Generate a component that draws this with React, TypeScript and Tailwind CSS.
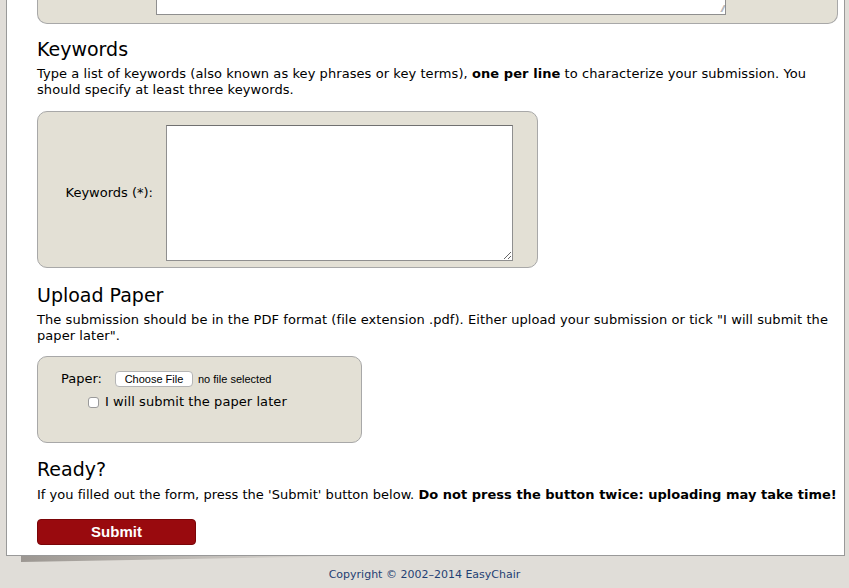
import React from "react";

const body = "font-['DejaVu_Sans',Verdana,sans-serif] text-[13px] leading-[16px] text-black";
const heading = "font-['DejaVu_Sans',Verdana,sans-serif] text-[19px] leading-[24px] text-black";
const box = "border border-[#a8a8a8] bg-[#e3e0d5] rounded-[10px]";

const Textarea = ({ className }: { className: string }) => (
  <textarea className={`block bg-white border border-[#8f8f8f] border-t-[#707070] outline-none resize ${className}`} />
);

const App = () => {
  return (
    <div className="min-h-screen bg-[#e0ddd8] overflow-hidden">
      <div className="ml-[6px] mr-[4px] bg-white border border-t-0 border-[#999] pl-[30px] pr-[6px] pb-[10px]">
        {/* tail of the abstract box above */}
        <div className="border border-t-0 border-[#a8a8a8] bg-[#e3e0d5] rounded-b-[10px] w-[801px] h-[24px] pl-[118px]">
          <div className="w-[570px] h-[15px] bg-white border border-t-0 border-[#8f8f8f] relative">
            <span className="absolute right-[1px] bottom-[1px] text-[8px] leading-[8px] text-[#888]">⁄⁄</span>
          </div>
        </div>

        <h2 className={`${heading} mt-[13px]`}>Keywords</h2>
        <p className={`${body} mt-[5px] tracking-[0.07px]`}>
          Type a list of keywords (also known as key phrases or key terms), <b>one per line</b> to characterize
          your submission. You should specify at least three keywords.
        </p>
        <div className={`${box} mt-[13px] w-[501px] flex items-center pt-[13px] pb-[6px]`}>
          <label className={`${body} w-[115px] text-right`}>Keywords (*):</label>
          <Textarea className="ml-[13px] w-[347px] h-[136px]" />
        </div>

        <h2 className={`${heading} mt-[15px]`}>Upload Paper</h2>
        <p className={`${body} mt-[5px] tracking-[0.07px]`}>
          The submission should be in the PDF format (file extension .pdf). Either upload your submission or tick
          "I will submit the paper later".
        </p>
        <div className={`${box} mt-[12px] w-[325px] h-[87px] pl-[23px] pt-[13px]`}>
          <div className="flex items-center h-[18px]">
            <span className={`${body} w-[54px]`}>Paper:</span>
            <button className="h-[16px] w-[78px] bg-white border border-[#b5b5b5] rounded-[4px] font-['Liberation_Sans',Arial,sans-serif] text-[11px] leading-[14px] text-black">
              Choose File
            </button>
            <span className="ml-[5px] font-['Liberation_Sans',Arial,sans-serif] text-[11px] text-black">no file selected</span>
          </div>
          <label className="flex items-center h-[18px] mt-[5px] ml-[27px]">
            <input type="checkbox" className="w-[11px] h-[11px] m-0 appearance-none bg-white border border-[#9a9a9a] rounded-[3px]" />
            <span className={`${body} ml-[6px] tracking-[0.07px]`}>I will submit the paper later</span>
          </label>
        </div>

        <h2 className={`${heading} mt-[14px]`}>Ready?</h2>
        <p className={`${body} mt-[6px] whitespace-nowrap tracking-[0.02px]`}>
          If you filled out the form, press the 'Submit' button below.{" "}
          <b>Do not press the button twice: uploading may take time!</b>
        </p>
        <button className="mt-[16px] w-[159px] h-[26px] rounded-[4px] bg-[#990a0e] border border-[#7a0508] text-white font-['Liberation_Sans',Arial,sans-serif] font-bold text-[15px] leading-[20px]">
          Submit
        </button>
      </div>
      <div className="ml-[21px] w-[330px] h-[6px] bg-gradient-to-r from-[#9c9792] to-[#e0ddd8] [clip-path:polygon(0_0,100%_0,0_100%)]" />
      <p className="mt-[6px] text-center font-['DejaVu_Sans',Verdana,sans-serif] text-[11px] leading-[14px] text-[#1f3f73]">
        Copyright © 2002–2014 EasyChair
      </p>
    </div>
  );
};

export default App;
